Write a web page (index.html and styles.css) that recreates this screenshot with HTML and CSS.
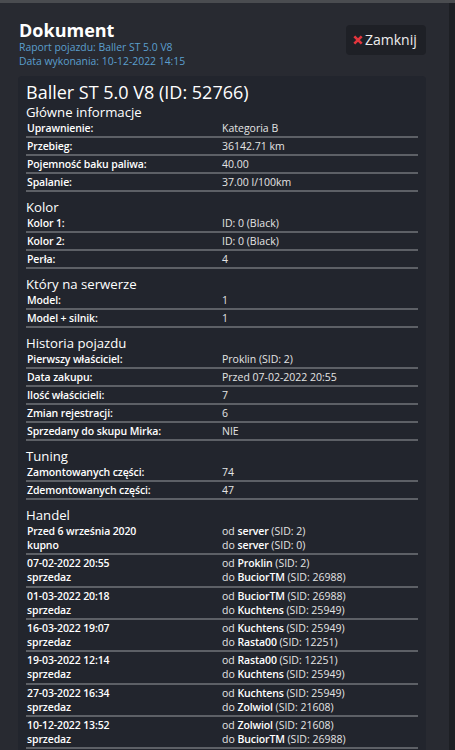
FILE: index.html
```html
<!DOCTYPE html>
<html lang="pl">
<head>
<meta charset="utf-8">
<title>Dokument</title>
<link rel="stylesheet" href="styles.css">
</head>
<body>
<div class="page">
  <div class="panel">
    <header class="head">
      <div class="titles">
        <h1 class="doc-title">Dokument</h1>
        <p class="sub">Raport pojazdu: Baller ST 5.0 V8</p>
        <p class="sub">Data wykonania: 10-12-2022 14:15</p>
      </div>
      <button class="close" type="button">
        <svg class="x" viewBox="0 0 10 10" width="10" height="10"><path d="M1.3 1.3 L8.7 8.7 M8.7 1.3 L1.3 8.7" stroke="#e2353d" stroke-width="2.6" stroke-linecap="butt" fill="none"/></svg>
        <span>Zamknij</span>
      </button>
    </header>
    <section class="card">
      <h2 class="car-title">Baller ST 5.0 V8 (ID: 52766)</h2>

      <h3 class="sec">Główne informacje</h3>
      <div class="rows">
        <div class="row"><span class="k">Uprawnienie:</span><span class="v">Kategoria B</span></div>
        <div class="row"><span class="k">Przebieg:</span><span class="v">36142.71 km</span></div>
        <div class="row"><span class="k">Pojemność baku paliwa:</span><span class="v">40.00</span></div>
        <div class="row"><span class="k">Spalanie:</span><span class="v">37.00 l/100km</span></div>
      </div>

      <h3 class="sec">Kolor</h3>
      <div class="rows">
        <div class="row"><span class="k">Kolor 1:</span><span class="v">ID: 0 (Black)</span></div>
        <div class="row"><span class="k">Kolor 2:</span><span class="v">ID: 0 (Black)</span></div>
        <div class="row"><span class="k">Perła:</span><span class="v">4</span></div>
      </div>

      <h3 class="sec">Który na serwerze</h3>
      <div class="rows">
        <div class="row"><span class="k">Model:</span><span class="v">1</span></div>
        <div class="row"><span class="k">Model + silnik:</span><span class="v">1</span></div>
      </div>

      <h3 class="sec">Historia pojazdu</h3>
      <div class="rows">
        <div class="row"><span class="k">Pierwszy właściciel:</span><span class="v">Proklin (SID: 2)</span></div>
        <div class="row"><span class="k">Data zakupu:</span><span class="v">Przed 07-02-2022 20:55</span></div>
        <div class="row"><span class="k">Ilość właścicieli:</span><span class="v">7</span></div>
        <div class="row"><span class="k">Zmian rejestracji:</span><span class="v">6</span></div>
        <div class="row"><span class="k">Sprzedany do skupu Mirka:</span><span class="v">NIE</span></div>
      </div>

      <h3 class="sec">Tuning</h3>
      <div class="rows">
        <div class="row"><span class="k">Zamontowanych części:</span><span class="v">74</span></div>
        <div class="row"><span class="k">Zdemontowanych części:</span><span class="v">47</span></div>
      </div>

      <h3 class="sec">Handel</h3>
      <div class="rows">
        <div class="trade">
          <div class="k"><div>Przed 6 września 2020</div><div>kupno</div></div>
          <div class="v"><div>od <b>server</b> (SID: 2)</div><div>do <b>server</b> (SID: 0)</div></div>
        </div>
        <div class="trade">
          <div class="k"><div>07-02-2022 20:55</div><div>sprzedaz</div></div>
          <div class="v"><div>od <b>Proklin</b> (SID: 2)</div><div>do <b>BuciorTM</b> (SID: 26988)</div></div>
        </div>
        <div class="trade">
          <div class="k"><div>01-03-2022 20:18</div><div>sprzedaz</div></div>
          <div class="v"><div>od <b>BuciorTM</b> (SID: 26988)</div><div>do <b>Kuchtens</b> (SID: 25949)</div></div>
        </div>
        <div class="trade">
          <div class="k"><div>16-03-2022 19:07</div><div>sprzedaz</div></div>
          <div class="v"><div>od <b>Kuchtens</b> (SID: 25949)</div><div>do <b>Rasta00</b> (SID: 12251)</div></div>
        </div>
        <div class="trade">
          <div class="k"><div>19-03-2022 12:14</div><div>sprzedaz</div></div>
          <div class="v"><div>od <b>Rasta00</b> (SID: 12251)</div><div>do <b>Kuchtens</b> (SID: 25949)</div></div>
        </div>
        <div class="trade">
          <div class="k"><div>27-03-2022 16:34</div><div>sprzedaz</div></div>
          <div class="v"><div>od <b>Kuchtens</b> (SID: 25949)</div><div>do <b>Zolwiol</b> (SID: 21608)</div></div>
        </div>
        <div class="trade">
          <div class="k"><div>10-12-2022 13:52</div><div>sprzedaz</div></div>
          <div class="v"><div>od <b>Zolwiol</b> (SID: 21608)</div><div>do <b>BuciorTM</b> (SID: 26988)</div></div>
        </div>
        <div class="trade">
          <div class="k"><div>&nbsp;</div><div>&nbsp;</div></div>
          <div class="v"><div>&nbsp;</div><div>&nbsp;</div></div>
        </div>
      </div>
    </section>
  </div>
</div>
</body>
</html>
```

FILE: styles.css
```css
html, body {
  margin: 0;
  padding: 0;
  height: 100%;
  overflow: hidden;
}
body {
  background: #1d1f24;
  font-family: "Open Sans", "Noto Sans", sans-serif;
  color: #ffffff;
}
.page {
  height: 100%;
  border-top: 3px solid #4a4c50;
  box-sizing: border-box;
}
.panel {
  width: 449px;
  height: 100%;
  background: #282a31;
  padding: 17px 23px 0 18px;
  box-sizing: border-box;
  overflow: hidden;
}
.head {
  display: flex;
  justify-content: space-between;
  align-items: flex-start;
}
.doc-title {
  margin: 0 0 0 1px;
  font-size: 18px;
  font-weight: 700;
  line-height: 20px;
  color: #ffffff;
}
.sub {
  margin: 0 0 0 1px;
  font-size: 10.4px;
  line-height: 14px;
  color: #5b9fcd;
}
.close {
  margin-top: 5px;
  display: flex;
  align-items: center;
  gap: 2px;
  width: 80px;
  height: 30px;
  padding: 0 0 0 7px;
  border: 0;
  border-radius: 4px;
  background: #1e2026;
  color: #eeeeee;
  font-family: "Open Sans", "Noto Sans", sans-serif;
  font-size: 14px;
  line-height: 16px;
  box-sizing: border-box;
}
.close .x {
  display: block;
  flex: none;
}
.card {
  margin-top: 8px;
  background: #22252d;
  border-radius: 4px;
  padding: 4px 8px 0 8px;
}
.car-title {
  margin: 0;
  font-size: 18px;
  font-weight: 400;
  line-height: 24px;
  color: #ffffff;
}
.sec {
  margin: 7px 0 0 0;
  font-size: 13.2px;
  font-weight: 400;
  line-height: 16px;
  color: #ffffff;
}
.car-title + .sec {
  margin-top: 0;
}
.rows {
  display: flex;
  flex-direction: column;
}
.row, .trade {
  display: grid;
  grid-template-columns: 196px 1fr;
  border-bottom: 2px solid #5d6066;
  font-size: 10.5px;
}
.row {
  line-height: 16px;
}
.trade {
  line-height: 14px;
  padding: 1px 0 1.33px 0;
}
.k {
  padding-left: 1px;
  font-weight: 600;
  color: #ffffff;
  letter-spacing: -0.12px;
}
.v {
  color: #e4e4e4;
}
.v b {
  font-weight: 600;
  color: #ffffff;
  letter-spacing: -0.12px;
}
```
